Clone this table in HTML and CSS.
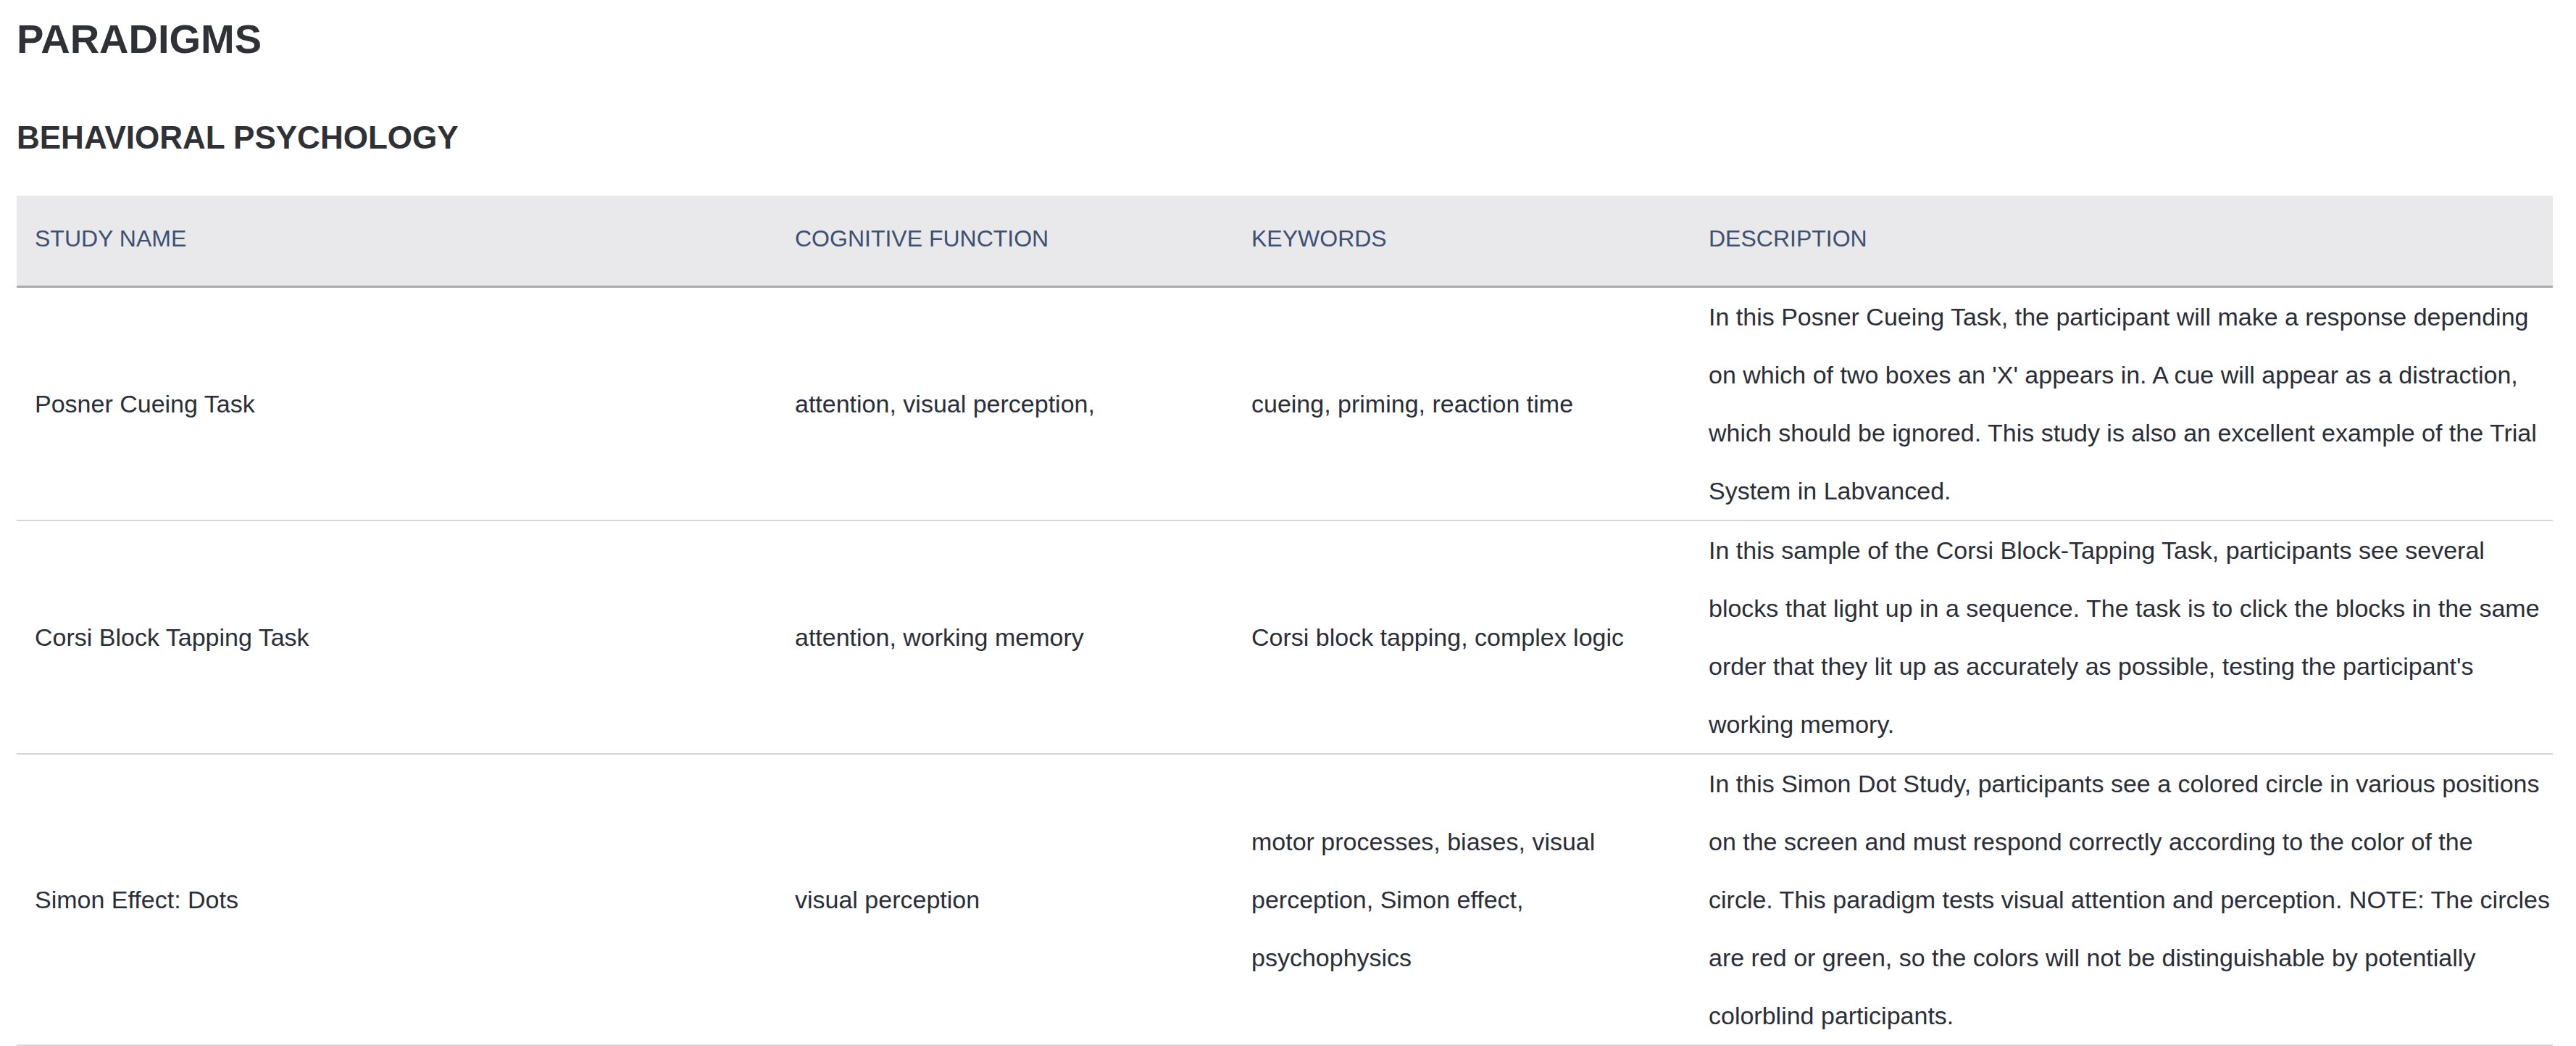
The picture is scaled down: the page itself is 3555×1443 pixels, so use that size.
FILE: index.html
```html
<!DOCTYPE html>
<html lang="en">
<head>
<meta charset="utf-8">
<title>Paradigms</title>
<link rel="stylesheet" href="styles.css">
</head>
<body>
<main class="page">
  <h1 class="page-title">PARADIGMS</h1>
  <h2 class="section-title">BEHAVIORAL PSYCHOLOGY</h2>
  <table class="studies">
    <colgroup>
      <col class="col-name">
      <col class="col-function">
      <col class="col-keywords">
      <col class="col-desc">
    </colgroup>
    <thead>
      <tr>
        <th>STUDY NAME</th>
        <th>COGNITIVE FUNCTION</th>
        <th>KEYWORDS</th>
        <th>DESCRIPTION</th>
      </tr>
    </thead>
    <tbody>
      <tr>
        <td>Posner Cueing Task</td>
        <td>attention, visual perception,</td>
        <td>cueing, priming, reaction time</td>
        <td class="desc">In this Posner Cueing Task, the participant will make a response depending<br>on which of two boxes an 'X' appears in. A cue will appear as a distraction,<br>which should be ignored. This study is also an excellent example of the Trial<br>System in Labvanced.</td>
      </tr>
      <tr>
        <td>Corsi Block Tapping Task</td>
        <td>attention, working memory</td>
        <td>Corsi block tapping, complex logic</td>
        <td class="desc">In this sample of the Corsi Block-Tapping Task, participants see several<br>blocks that light up in a sequence. The task is to click the blocks in the same<br>order that they lit up as accurately as possible, testing the participant's<br>working memory.</td>
      </tr>
      <tr>
        <td>Simon Effect: Dots</td>
        <td>visual perception</td>
        <td>motor processes, biases, visual perception, Simon effect, psychophysics</td>
        <td class="desc">In this Simon Dot Study, participants see a colored circle in various positions<br>on the screen and must respond correctly according to the color of the<br>circle. This paradigm tests visual attention and perception. NOTE: The circles<br>are red or green, so the colors will not be distinguishable by potentially<br>colorblind participants.</td>
      </tr>
    </tbody>
  </table>
</main>
</body>
</html>
```

FILE: styles.css
```css
html, body {
  margin: 0;
  padding: 0;
  background: #ffffff;
}

body {
  font-family: "Liberation Sans", Arial, sans-serif;
  color: #2b2e38;
}

.page {
  padding: 21px 32px 0 23px;
}

.page-title {
  margin: 0;
  font-size: 56px;
  line-height: 66px;
  font-weight: 700;
  color: #303136;
}

.section-title {
  margin: 77px 0 0 0;
  font-size: 44px;
  line-height: 52px;
  font-weight: 700;
  color: #303136;
}

.studies {
  margin-top: 54px;
  width: 3500px;
  table-layout: fixed;
  border-collapse: separate;
  border-spacing: 0;
}

.col-name { width: 1049px; }
.col-function { width: 630px; }
.col-keywords { width: 631px; }
.col-desc { width: 1190px; }

.studies th {
  background: #e9e8eb;
  color: #3e5072;
  font-size: 32px;
  line-height: 80px;
  font-weight: 400;
  text-align: left;
  padding: 19px 12px 25px 25px;
  border-bottom: 3px solid #a9a9a9;
}

.studies td {
  font-size: 34px;
  line-height: 80px;
  padding: 0 12px 0 25px;
  vertical-align: middle;
  border-bottom: 2px solid #d5d5d5;
  color: #2b2e38;
}

.studies td.desc {
  padding-right: 0;
  white-space: nowrap;
}
```
